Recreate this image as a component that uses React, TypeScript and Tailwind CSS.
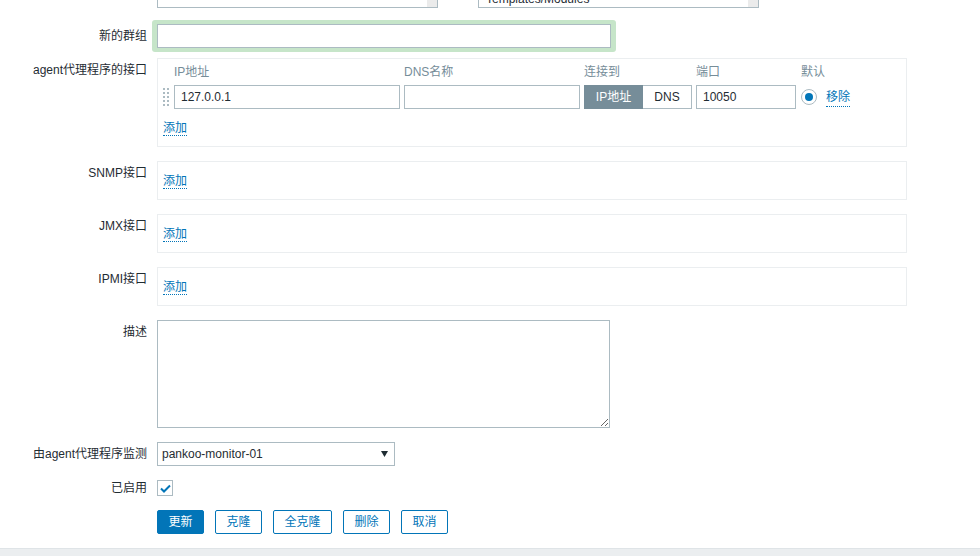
import type { ReactNode } from "react";

const font = "font-['Liberation_Sans','Noto_Sans_CJK_SC',sans-serif]";

function FormRow({
  label,
  children,
  className = "",
  labelClassName = "leading-[24px]",
}: {
  label: string;
  children: ReactNode;
  className?: string;
  labelClassName?: string;
}) {
  return (
    <div className={`flex gap-[10px] ${className}`}>
      <div className={`w-[147px] shrink-0 text-right text-[#1f2c33] ${labelClassName}`}>{label}</div>
      <div>{children}</div>
    </div>
  );
}

function AddLink() {
  return (
    <span className="border-b border-dotted border-[#0275b8] text-[#0275b8] cursor-pointer">添加</span>
  );
}

function DragHandle() {
  return (
    <div className="grid grid-cols-2 gap-x-[2px] gap-y-[2px] w-[6px]">
      {Array.from({ length: 10 }).map((_, i) => (
        <span key={i} className="block h-[2px] w-[2px] bg-[#acbbc2]" />
      ))}
    </div>
  );
}

function EmptyInterface() {
  return (
    <div className="w-[750px] border border-[#ebeef0] pl-[5px] pt-[11px] pb-[10px] leading-[16px]">
      <AddLink />
    </div>
  );
}

export default function App() {
  return (
    <div className={`min-h-[556px] bg-white text-[12px] ${font}`}>
      {/* Previous row, cut off at the top */}
      <div className="flex h-[8px] gap-[40px] overflow-hidden pl-[157px]">
        <div className="flex w-[281px] justify-end border-x border-b border-[#acbbc2]">
          <div className="w-[10px] bg-[#ebebeb]" />
        </div>
        <div className="flex w-[281px] justify-between border-x border-b border-[#acbbc2]">
          <span className="-mt-[8px] pl-[7px] leading-[14px] text-[#1f2c33]">Templates/Modules</span>
          <div className="w-[10px] bg-[#ebebeb]" />
        </div>
      </div>

      {/* New group */}
      <FormRow label="新的群组" className="mt-[12px]" labelClassName="pt-[4px] leading-[24px]">
        <div className="-ml-[5px] rounded-[3px] bg-[#c6e5c9] px-[5px] py-[4px]">
          <input
            className="block h-[24px] w-[454px] border border-[#acbbc2] bg-white px-[5px] outline-none"
            defaultValue=""
          />
        </div>
      </FormRow>

      {/* Agent interfaces */}
      <FormRow label="agent代理程序的接口" className="mt-[6px]">
        <div className="w-[750px] border border-[#ebeef0] pl-[5px] pb-[10px]">
          <div className="flex h-[26px] items-center text-[#768d99]">
            <div className="w-[11px]" />
            <div className="w-[226px]">IP地址</div>
            <div className="ml-[4px] w-[176px]">DNS名称</div>
            <div className="ml-[4px] w-[108px]">连接到</div>
            <div className="ml-[4px] w-[100px]">端口</div>
            <div className="ml-[5px]">默认</div>
          </div>
          <div className="flex h-[24px] items-center">
            <div className="w-[11px]">
              <DragHandle />
            </div>
            <input
              className="h-[24px] w-[226px] border border-[#acbbc2] px-[6px] text-[#1f2c33] outline-none"
              defaultValue="127.0.0.1"
            />
            <input
              className="ml-[4px] h-[24px] w-[176px] border border-[#acbbc2] px-[6px] outline-none"
              defaultValue=""
            />
            <div className="ml-[4px] flex h-[24px] w-[108px]">
              <div className="flex w-[59px] items-center justify-center bg-[#768d99] text-white">IP地址</div>
              <div className="flex flex-1 items-center justify-center border border-l-0 border-[#acbbc2] text-[#1f2c33]">
                DNS
              </div>
            </div>
            <input
              className="ml-[4px] h-[24px] w-[100px] border border-[#acbbc2] px-[6px] text-[#1f2c33] outline-none"
              defaultValue="10050"
            />
            <div className="ml-[5px] flex h-[16px] w-[16px] items-center justify-center rounded-full border border-[#acbbc2]">
              <span className="block h-[8px] w-[8px] rounded-full bg-[#0275b8]" />
            </div>
            <span className="ml-[9px] border-b border-dotted border-[#0275b8] text-[#0275b8]">移除</span>
          </div>
          <div className="mt-[11px] leading-[16px]">
            <AddLink />
          </div>
        </div>
      </FormRow>

      <FormRow label="SNMP接口" className="mt-[14px]">
        <EmptyInterface />
      </FormRow>
      <FormRow label="JMX接口" className="mt-[14px]">
        <EmptyInterface />
      </FormRow>
      <FormRow label="IPMI接口" className="mt-[14px]">
        <EmptyInterface />
      </FormRow>

      {/* Description */}
      <FormRow label="描述" className="mt-[14px]">
        <textarea className="block h-[108px] w-[453px] border border-[#acbbc2] px-[5px] outline-none" />
      </FormRow>

      {/* Monitored by proxy */}
      <FormRow label="由agent代理程序监测" className="mt-[14px]">
        <div className="flex h-[24px] w-[238px] items-center justify-between border border-[#acbbc2] pl-[4px] pr-[6px] text-[#1f2c33]">
          <span>pankoo-monitor-01</span>
          <svg width="7" height="6" viewBox="0 0 7 6" aria-hidden="true">
            <path d="M0 0h7L3.5 6z" fill="#1f2c33" />
          </svg>
        </div>
      </FormRow>

      {/* Enabled */}
      <FormRow label="已启用" className="mt-[14px]" labelClassName="leading-[16px]">
        <div className="flex h-[16px] w-[16px] items-center justify-center border border-[#acbbc2] bg-white">
          <svg width="11" height="9" viewBox="0 0 11 9" aria-hidden="true">
            <path d="M1 4.5l3 3L10 1.5" fill="none" stroke="#0275b8" strokeWidth="2" />
          </svg>
        </div>
      </FormRow>

      {/* Buttons */}
      <div className="mt-[14px] flex gap-[11px] pl-[157px]">
        <button className="h-[24px] w-[47px] rounded-[2px] border border-[#0275b8] bg-[#0275b8] text-white">
          更新
        </button>
        <button className="h-[24px] w-[47px] rounded-[2px] border border-[#0275b8] bg-white text-[#0275b8]">
          克隆
        </button>
        <button className="h-[24px] w-[59px] rounded-[2px] border border-[#0275b8] bg-white text-[#0275b8]">
          全克隆
        </button>
        <button className="h-[24px] w-[47px] rounded-[2px] border border-[#0275b8] bg-white text-[#0275b8]">
          删除
        </button>
        <button className="h-[24px] w-[47px] rounded-[2px] border border-[#0275b8] bg-white text-[#0275b8]">
          取消
        </button>
      </div>

      {/* Footer strip */}
      <div className="mt-[14px] h-[20px] border-t border-[#dfe4e7] bg-[#ebeef0]" />
    </div>
  );
}
